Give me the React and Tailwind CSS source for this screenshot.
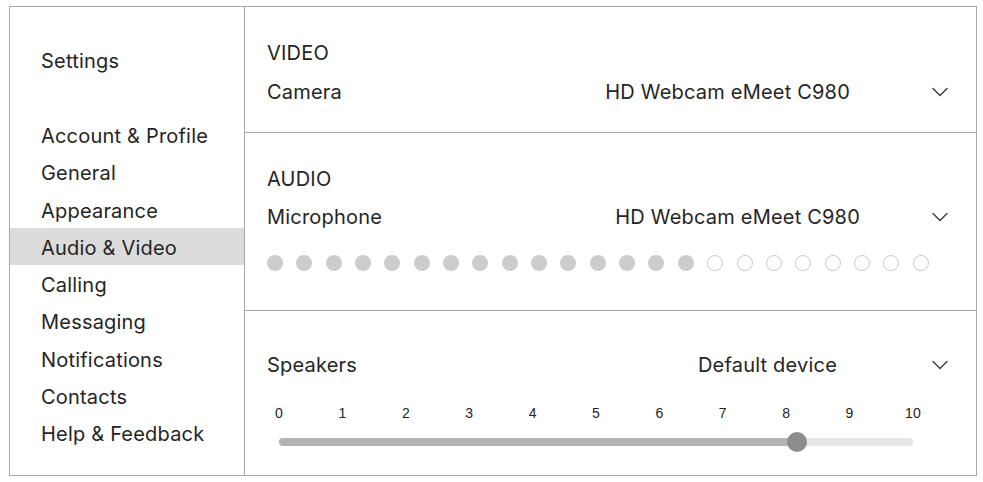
import React from "react";

const Chevron = () => (
  <svg width="16" height="10" viewBox="0 0 16 10" className="block">
    <polyline points="1,1.5 8,8.5 15,1.5" fill="none" stroke="#3a3a3a" strokeWidth="1.4" strokeLinecap="round" strokeLinejoin="round" />
  </svg>
);

const menu = [
  "Account & Profile",
  "General",
  "Appearance",
  "Audio & Video",
  "Calling",
  "Messaging",
  "Notifications",
  "Contacts",
  "Help & Feedback",
];

export default function App() {
  const dots = Array.from({ length: 23 }, (_, i) => i < 15);
  const nums = Array.from({ length: 11 }, (_, i) => i);
  return (
    <div className="w-[983px] h-[482px] bg-white pt-[6px] pl-[9px] text-[#252525] tracking-[0.2px]" style={{ fontFamily: "Inter, 'Noto Sans', sans-serif" }}>
      <div className="w-[968px] h-[470px] border border-[#a8a8a8] flex">
        <div className="w-[235px] border-r border-[#a8a8a8] flex flex-col pt-[35px]">
          <div className="h-[38px] flex items-center pl-[31px] text-[20px]">Settings</div>
          <div className="mt-[36px] flex flex-col">
            {menu.map((m) => (
              <div
                key={m}
                className={`h-[37.25px] flex items-center pl-[31px] pt-[3px] text-[20px] ${m === "Audio & Video" ? "bg-[#dcdcdc]" : ""}`}
              >
                {m}
              </div>
            ))}
          </div>
        </div>
        <div className="flex-1 flex flex-col">
          <div className="h-[126px] border-b border-[#a8a8a8] pt-[27px] px-[22px] flex flex-col">
            <div className="h-[38px] flex items-center text-[20px]">VIDEO</div>
            <div className="h-[38px] mt-[1px] flex items-center text-[20px]">
              <span className="flex-1">Camera</span>
              <span className="mr-[82px]">HD Webcam eMeet C980</span>
              <span className="mr-[6px]"><Chevron /></span>
            </div>
          </div>
          <div className="h-[178px] border-b border-[#a8a8a8] pt-[27px] px-[22px] flex flex-col">
            <div className="h-[38px] flex items-center text-[20px]">AUDIO</div>
            <div className="h-[38px] flex items-center text-[20px]">
              <span className="flex-1">Microphone</span>
              <span className="mr-[72px]">HD Webcam eMeet C980</span>
              <span className="mr-[6px]"><Chevron /></span>
            </div>
            <div className="mt-[19px] flex gap-[13.35px]">
              {dots.map((f, i) => (
                <div
                  key={i}
                  className={`w-[16px] h-[16px] rounded-full shrink-0 ${f ? "bg-[#cccccc]" : "border-[1.5px] border-[#c9c9c9] bg-white"}`}
                />
              ))}
            </div>
          </div>
          <div className="flex-1 pt-[35px] px-[22px] flex flex-col">
            <div className="h-[38px] flex items-center text-[20px]">
              <span className="flex-1">Speakers</span>
              <span className="mr-[95px]">Default device</span>
              <span className="mr-[6px]"><Chevron /></span>
            </div>
            <div className="mt-[19px] ml-[2px] w-[654px] flex justify-between text-[14px] h-[20px] items-center tracking-normal" style={{ fontFamily: "'Liberation Sans', Arial, sans-serif" }}>
              {nums.map((n) => (
                <span key={n} className="w-[20px] text-center">{n}</span>
              ))}
            </div>
            <div className="mt-[15px] ml-[12px] w-[634px] h-[8px] rounded-full bg-[#e6e6e6] relative">
              <div className="h-[8px] w-[518px] rounded-full bg-[#b3b3b3]" />
              <div className="absolute left-[508px] top-[-6px] w-[20px] h-[20px] rounded-full bg-[#8c8c8c]" />
            </div>
          </div>
        </div>
      </div>
    </div>
  );
}
